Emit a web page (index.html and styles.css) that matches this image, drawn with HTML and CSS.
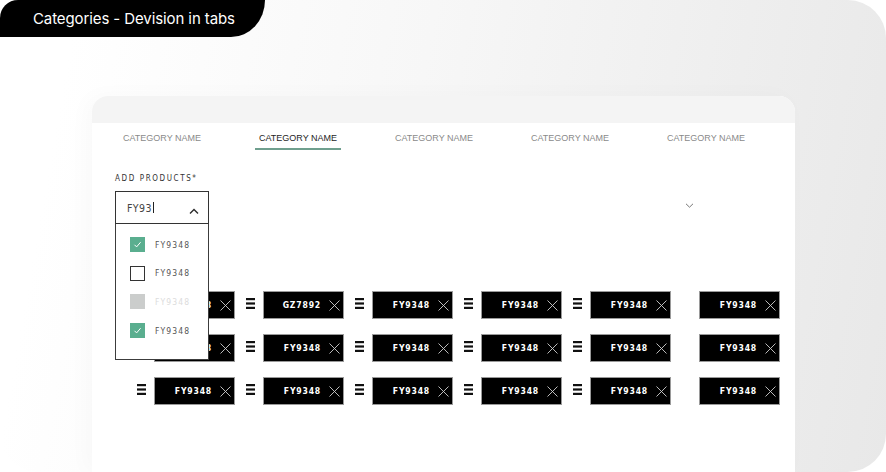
FILE: index.html
```html
<!DOCTYPE html>
<html lang="en">
<head>
    <meta charset="UTF-8">
    <meta name="viewport" content="width=device-width, initial-scale=1.0">
    <title>Categories - Devision in tabs</title>
    <link rel="stylesheet" href="styles.css">
</head>
<body>
    <div class="frame">
        <div class="frame-title">Categories - Devision in tabs</div>

        <div class="panel">
            <div class="panel-bar"></div>

            <nav class="tabs">
                <a class="tab"><span>CATEGORY NAME</span></a>
                <a class="tab active"><span>CATEGORY NAME</span></a>
                <a class="tab"><span>CATEGORY NAME</span></a>
                <a class="tab"><span>CATEGORY NAME</span></a>
                <a class="tab"><span>CATEGORY NAME</span></a>
            </nav>

            <div class="panel-body">
                <div class="field-label">ADD PRODUCTS*</div>
                <div class="field-row">
                    <div class="select">
                        <div class="select-box">
                            <span class="select-value">FY93</span><span class="caret"></span>
                            <svg class="select-arrow" width="10" height="6" viewBox="0 0 10 6">
                                <path d="M1 5.5 L5 1.5 L9 5.5" fill="none" stroke="#2b2b2b" stroke-width="1.4"/>
                            </svg>
                        </div>
                        <ul class="options">
                            <li class="option checked"><span class="box"><svg width="15" height="15" viewBox="0 0 15 15"><path d="M4.5 7.8 L6.6 9.9 L10.6 5.2" fill="none" stroke="#fff" stroke-width="1"/></svg></span>FY9348</li>
                            <li class="option"><span class="box"></span>FY9348</li>
                            <li class="option disabled"><span class="box"></span>FY9348</li>
                            <li class="option checked"><span class="box"><svg width="15" height="15" viewBox="0 0 15 15"><path d="M4.5 7.8 L6.6 9.9 L10.6 5.2" fill="none" stroke="#fff" stroke-width="1"/></svg></span>FY9348</li>
                        </ul>
                    </div>
                    <svg class="more-arrow" width="9" height="5" viewBox="0 0 9 5">
                        <path d="M1 0.8 L4.5 4.2 L8 0.8" fill="none" stroke="#777" stroke-width="1"/>
                    </svg>
                </div>

                <div class="chips" id="chips"></div>
            </div>
        </div>
    </div>

    <script>
        // 3 rows x 6 columns of selected products, the last column has no drag handle
        const codes = [
            ["FY9348", "GZ7892", "FY9348", "FY9348", "FY9348", "FY9348"],
            ["FY9348", "FY9348", "FY9348", "FY9348", "FY9348", "FY9348"],
            ["FY9348", "FY9348", "FY9348", "FY9348", "FY9348", "FY9348"]
        ];
        const chips = document.getElementById("chips");
        const handle = '<svg class="handle" width="9" height="11" viewBox="0 0 9 11">' +
            '<rect y="0" width="9" height="2.2" fill="#111"/>' +
            '<rect y="4.4" width="9" height="2.2" fill="#111"/>' +
            '<rect y="8.8" width="9" height="2.2" fill="#111"/></svg>';
        const cross = '<svg class="chip-x" width="11" height="11" viewBox="0 0 11 11">' +
            '<path d="M0.5 0.5 L10.5 10.5 M10.5 0.5 L0.5 10.5" stroke="#cfcfcf" stroke-width="0.9"/></svg>';

        codes.forEach(function(row) {
            row.forEach(function(code, i) {
                const cell = document.createElement("div");
                cell.className = "chip-cell" + (i === 5 ? " no-handle" : "");
                cell.innerHTML = handle + '<div class="chip"><span>' + code + '</span>' + cross + '</div>';
                chips.appendChild(cell);
            });
        });
    </script>
</body>
</html>
```

FILE: styles.css
```css
body, html {
    margin: 0;
    background: #fff;
}
.frame {
    width: 886px;
    height: 472px;
    border-radius: 18px 38px 38px 38px;
    overflow: hidden;
    background: linear-gradient(100deg, #ffffff 8%, #f7f7f7 45%, #ececec 85%, #e8e8e8 100%);
}
.frame-title {
    width: 232px;
    height: 37px;
    padding-left: 33px;
    background: #000;
    color: #fff;
    font-family: Inter, "Open Sans", sans-serif;
    font-size: 15px;
    line-height: 37px;
    letter-spacing: -0.1px;
    border-bottom-right-radius: 34px 37px;
}
.panel {
    margin: 59px 0 0 92px;
    width: 703px;
    height: 376px;
    background: #fff;
    border-radius: 16px 16px 0 0;
    box-shadow: -6px 0 22px rgba(0, 0, 0, 0.025);
    overflow: hidden;
}
.panel-bar {
    height: 27px;
    background: #f4f4f4;
}
.tabs {
    display: flex;
    width: 680px;
    padding: 9px 0 0 2px;
}
.tab {
    flex: 1;
    display: flex;
    justify-content: center;
    font-family: "Liberation Sans", Arial, sans-serif;
    font-size: 9px;
    line-height: 12px;
    color: #8a8a8a;
}
.tab span {
    padding: 0 4px 4px;
    border-bottom: 2px solid transparent;
}
.tab.active {
    color: #1e1e1e;
}
.tab.active span {
    border-bottom-color: #6f9f8e;
}
.panel-body {
    padding: 0 0 0 23px;
    position: relative;
}
.field-label {
    margin-top: 24px;
    font-family: "DejaVu Sans Condensed", "DejaVu Sans", sans-serif;
    font-size: 8px;
    line-height: 10px;
    letter-spacing: 1.6px;
    color: #333;
}
.field-row {
    display: flex;
    justify-content: space-between;
    align-items: center;
    width: 579px;
    margin-top: 7px;
}
.select {
    position: relative;
    width: 94px;
}
.select-box {
    box-sizing: border-box;
    height: 33px;
    border: 1px solid #333;
    display: flex;
    align-items: center;
    padding: 0 9px 0 11px;
    font-family: "DejaVu Sans Condensed", "DejaVu Sans", sans-serif;
    font-size: 10.5px;
    color: #444;
    letter-spacing: 0.4px;
}
.caret {
    width: 1px;
    height: 11px;
    background: #222;
    margin-left: 1px;
}
.select-arrow {
    margin-left: auto;
    margin-top: 6px;
}
.options {
    position: absolute;
    top: 100%;
    left: 0;
    z-index: 2;
    box-sizing: border-box;
    width: 94px;
    height: 136px;
    margin: 0;
    padding: 13px 0 0 14px;
    list-style: none;
    background: #fff;
    border: 1px solid #3c3c3c;
    border-top: none;
}
.option {
    display: flex;
    align-items: center;
    gap: 10px;
    height: 15px;
    margin-bottom: 13.7px;
    font-family: "DejaVu Sans Condensed", "DejaVu Sans", sans-serif;
    font-size: 8.5px;
    letter-spacing: 1.1px;
    color: #555;
}
.box {
    box-sizing: border-box;
    width: 15px;
    height: 15px;
    border: 1.5px solid #333;
    background: #fff;
}
.option.checked .box {
    border: none;
    background: #5aae8f;
}
.option.disabled .box {
    border: none;
    background: #cbcdcc;
}
.option.disabled {
    color: #dcdcdc;
}
.more-arrow {
    margin-bottom: 5px;
}
.chips {
    display: grid;
    grid-template-columns: repeat(6, auto);
    justify-content: start;
    column-gap: 11px;
    row-gap: 15px;
    margin: 67px 0 0 22px;
}
.chip-cell {
    display: flex;
    align-items: center;
    gap: 8px;
}
.chip-cell.no-handle .handle {
    visibility: hidden;
}
.handle {
    margin-top: -3px;
}
.chip {
    box-sizing: border-box;
    width: 81px;
    height: 28px;
    background: #000;
    border: 1px solid #9a9a9a;
    display: flex;
    align-items: center;
    justify-content: flex-end;
    gap: 8px;
    padding-right: 3px;
    font-family: "DejaVu Sans Condensed", "DejaVu Sans", sans-serif;
    font-weight: bold;
    font-size: 8.6px;
    letter-spacing: 0.8px;
    color: #fff;
}
```
